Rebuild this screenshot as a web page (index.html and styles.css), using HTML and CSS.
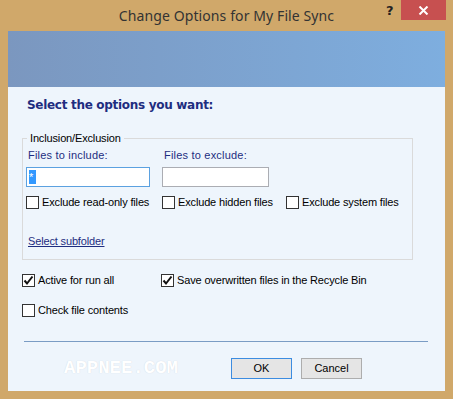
FILE: index.html
```html
<!DOCTYPE html>
<html lang="en">
<head>
  <meta charset="UTF-8" />
  <title>Change Options for My File Sync</title>
  <link rel="stylesheet" href="styles.css">
</head>
<body>
  <div class="window">
    <div class="titlebar">
      <span class="title">Change Options for My File Sync</span>
      <span class="help">?</span>
      <span class="close">
        <svg width="11" height="9" viewBox="0 0 11 9"><path d="M1.5 0.5 L9.5 8.5 M9.5 0.5 L1.5 8.5" stroke="#fff" stroke-width="2"/></svg>
      </span>
    </div>

    <div class="client">
      <div class="banner"></div>
      <h2 class="heading">Select the options you want:</h2>

      <fieldset class="group">
        <legend>Inclusion/Exclusion</legend>
        <div class="fields">
          <div class="field">
            <label>Files to include:</label>
            <div class="textbox focused"><span class="sel">*</span></div>
          </div>
          <div class="field">
            <label>Files to exclude:</label>
            <div class="textbox small"></div>
          </div>
        </div>
        <div class="checks">
          <div class="check w-ro"><span class="box"></span>Exclude read-only files</div>
          <div class="check w-hid"><span class="box"></span>Exclude hidden files</div>
          <div class="check"><span class="box"></span>Exclude system files</div>
        </div>
        <a class="link" href="#">Select subfolder</a>
      </fieldset>

      <div class="options">
        <div class="check w-run"><span class="box"><svg width="11" height="11" viewBox="0 0 11 11"><path d="M1.5 5.5 L4 8.5 L9.5 1.5" stroke="#111" stroke-width="2" fill="none"/></svg></span>Active for run all</div>
        <div class="check"><span class="box"><svg width="11" height="11" viewBox="0 0 11 11"><path d="M1.5 5.5 L4 8.5 L9.5 1.5" stroke="#111" stroke-width="2" fill="none"/></svg></span>Save overwritten files in the Recycle Bin</div>
      </div>
      <div class="options second">
        <div class="check"><span class="box"></span>Check file contents</div>
      </div>

      <hr class="sep">

      <div class="footer">
        <span class="watermark">APPNEE.COM</span>
        <button class="btn default">OK</button>
        <button class="btn">Cancel</button>
      </div>
    </div>
  </div>
</body>
</html>
```

FILE: styles.css
```css
body {
  margin: 0;
  font-family: 'Liberation Sans', Arial, sans-serif;
  font-size: 11px;
  color: #000;
}
.window {
  width: 453px;
  height: 399px;
  background: #d0a86a;
  display: flex;
  flex-direction: column;
}
.titlebar {
  height: 31px;
  display: flex;
  position: relative;
}
.title {
  position: absolute;
  left: 0; right: 0;
  top: 6px;
  text-align: center;
  font-family: 'Noto Sans', sans-serif;
  font-size: 14px;
  letter-spacing: 0.1px;
  color: #333;
}
.help {
  position: absolute;
  left: 386px;
  top: 3px;
  font-family: 'DejaVu Sans', sans-serif;
  font-weight: bold;
  font-size: 13px;
  color: #222;
}
.close {
  position: absolute;
  left: 401px;
  top: 0;
  width: 45px;
  height: 20px;
  background: #c75050;
  display: flex;
  align-items: center;
  justify-content: center;
}
.client {
  margin: 0 8px 8px;
  flex: 1;
  background: #eef5fc;
  display: flex;
  flex-direction: column;
}
.banner {
  height: 56px;
  background: linear-gradient(90deg, #7b97bf, #7eaedf);
}
.heading {
  margin: 10px 0 0 19px;
  font-family: 'DejaVu Sans', sans-serif;
  font-size: 12px;
  font-weight: bold;
  letter-spacing: -0.3px;
  color: #1e2d80;
  line-height: 16px;
}
.group {
  margin: 19px 0 0 14px;
  width: 391px;
  box-sizing: border-box;
  height: 128px;
  border: 1px solid #dadada;
  padding: 0 3px;
  letter-spacing: -0.15px;
}
.group legend {
  padding: 0 3px;
  margin-left: 1px;
  line-height: 13px;
}
.fields {
  display: flex;
  gap: 12px;
  margin-top: 3px;
}
.field label {
  display: block;
  color: #1e2d80;
  padding-left: 2px;
  line-height: 14px;
  margin-bottom: 5px;
  letter-spacing: 0.2px;
}
.textbox {
  width: 124px;
  height: 20px;
  box-sizing: border-box;
  border: 1px solid #abadb3;
  background: #fff;
  padding: 2px 0 0 2px;
}
.textbox.focused { border-color: #5ba1e0; }
.textbox.small { width: 107px; }
.sel {
  display: inline-block;
  background: #3399ff;
  color: #fff;
  width: 7px;
  height: 14px;
  line-height: 14px;
  font-size: 11px;
}
.checks {
  display: flex;
  margin-top: 9px;
}
.check {
  display: flex;
  align-items: center;
  gap: 3px;
  line-height: 13px;
  white-space: nowrap;
  letter-spacing: -0.15px;
}
.w-ro { width: 136px; }
.w-hid { width: 124px; }
.w-run { width: 139px; }
.box {
  width: 13px;
  height: 13px;
  box-sizing: border-box;
  border: 1px solid #333;
  background: #fff;
  display: flex;
  align-items: center;
  justify-content: center;
}
.link {
  display: inline-block;
  margin: 26px 0 0 2px;
  color: #1e2d80;
  line-height: 13px;
}
.options {
  display: flex;
  margin: 14px 0 0 14px;
}
.options.second { margin-top: 17px; }
.sep {
  margin: 24px 0 0 16px;
  width: 404px;
  border: 0;
  border-top: 1px solid #7a9cc4;
  height: 0;
}
.footer {
  display: flex;
  align-items: center;
  margin-top: 15px;
  padding-left: 56px;
}
.watermark {
  width: 167px;
  font-family: 'Liberation Mono', monospace;
  font-size: 19px;
  font-weight: bold;
  color: #fff;
  text-shadow: 0 0 1px #c9d2dc;
}
.btn {
  width: 61px;
  height: 21px;
  margin-right: 9px;
  background: #e5e5e5;
  border: 1px solid #adadad;
  font-family: 'Liberation Sans', Arial, sans-serif;
  font-size: 11px;
  padding: 0;
  color: #000;
}
.btn.default { border-color: #3c8ce0; }
```
